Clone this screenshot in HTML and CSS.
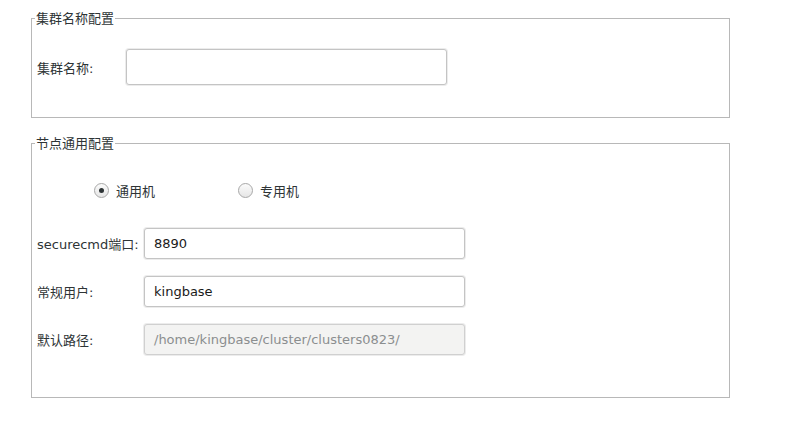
FILE: index.html
```html
<!DOCTYPE html>
<html lang="zh">
<head>
<meta charset="utf-8">
<link rel="stylesheet" href="styles.css">
</head>
<body>
<div class="page">
  <fieldset class="group group-name">
    <legend>集群名称配置</legend>
    <div class="row">
      <label class="label label-short">集群名称:</label>
      <div class="input input-tall"></div>
    </div>
  </fieldset>

  <fieldset class="group group-node">
    <legend>节点通用配置</legend>
    <div class="radios">
      <div class="radio-item">
        <span class="radio checked"><span class="dot"></span></span>
        <span>通用机</span>
      </div>
      <div class="radio-item">
        <span class="radio"></span>
        <span>专用机</span>
      </div>
    </div>
    <div class="rows">
      <div class="row">
        <label class="label label-long">securecmd端口:</label>
        <div class="input">8890</div>
      </div>
      <div class="row">
        <label class="label label-long">常规用户:</label>
        <div class="input">kingbase</div>
      </div>
      <div class="row">
        <label class="label label-long">默认路径:</label>
        <div class="input disabled">/home/kingbase/cluster/clusters0823/</div>
      </div>
    </div>
  </fieldset>
</div>
</body>
</html>
```
FILE: styles.css
```css
* { box-sizing: border-box; }
html, body {
  margin: 0;
  padding: 0;
  background: #ffffff;
  width: 802px;
  height: 438px;
  overflow: hidden;
}
body {
  font-family: "DejaVu Sans", "Noto Sans CJK SC", sans-serif;
  font-size: 13px;
  color: #2e3436;
}
.page {
  padding-left: 31px;
  display: flex;
  flex-direction: column;
}
.group {
  margin: 0;
  min-width: 0;
  width: 699px;
  border: 1px solid #b8b8b8;
  padding: 0 0 0 5px;
}
.group legend {
  margin-left: -2px;
  padding: 0 1px;
  line-height: 15px;
  font-size: 13px;
  color: #2e3436;
}
.group-name {
  margin-top: 11px;
  padding-top: 23px;
  padding-bottom: 32px;
}
.group-node {
  margin-top: 18px;
  padding-top: 29px;
  padding-bottom: 42px;
}
.row {
  display: flex;
  align-items: center;
}
.label {
  flex: none;
  white-space: nowrap;
}
.label-short { width: 89px; }
.label-long { width: 107px; }
.input {
  width: 321px;
  height: 31px;
  border: 1px solid #c4c4c4;
  border-radius: 3px;
  box-shadow: 0 0 0 1px #ececec;
  background: #ffffff;
  padding-left: 9px;
  display: flex;
  align-items: center;
  color: #1a1a1a;
}
.input-tall { height: 36px; }
.input.disabled {
  background: #f3f3f2;
  color: #8b8e8f;
  border-color: #d0d0d0;
}
.radios {
  display: flex;
  padding-left: 57px;
  height: 20px;
  align-items: center;
}
.radio-item {
  display: flex;
  align-items: center;
  gap: 7px;
  width: 144px;
}
.radio {
  width: 15px;
  height: 15px;
  border-radius: 50%;
  border: 1px solid #a8a8a8;
  background: linear-gradient(#fbfbfb, #e6e6e6);
  display: flex;
  align-items: center;
  justify-content: center;
}
.radio .dot {
  width: 5px;
  height: 5px;
  border-radius: 50%;
  background: #2e3436;
}
.rows {
  margin-top: 28px;
  display: flex;
  flex-direction: column;
  gap: 17px;
}
```
